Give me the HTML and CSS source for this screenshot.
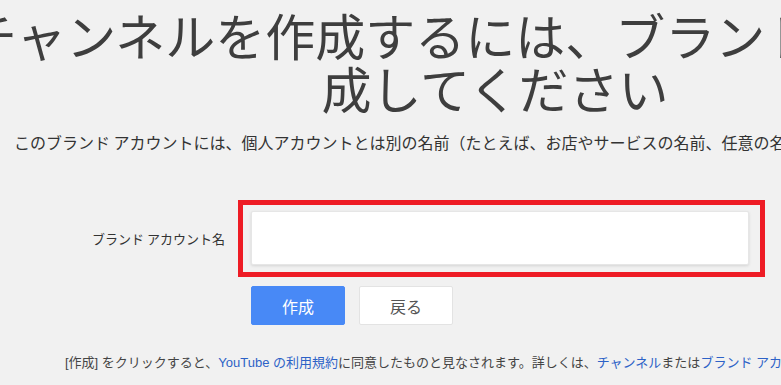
FILE: index.html
```html
<!DOCTYPE html>
<html lang="ja">
<head>
<meta charset="utf-8">
<title>ブランド アカウントを作成</title>
<link rel="stylesheet" href="styles.css">
</head>
<body>
<main class="page">
  <h1 class="title">YouTube チャンネルを作成するには、ブランド アカウントを作<br>成してください</h1>
  <p class="lead">このブランド アカウントには、個人アカウントとは別の名前（たとえば、お店やサービスの名前、任意の名前など）を使用できます。</p>
  <form class="form">
    <label class="form-label" for="brand-name">ブランド アカウント名</label>
    <div class="highlight">
      <input class="text-input" id="brand-name" type="text">
    </div>
    <div class="actions">
      <button class="btn btn-primary" type="button">作成</button>
      <button class="btn btn-secondary" type="button">戻る</button>
    </div>
  </form>
  <p class="terms">[作成] をクリックすると、<a href="#">YouTube の利用規約</a>に同意したものと見なされます。詳しくは、<a href="#">チャンネル</a>または<a href="#">ブランド アカウント</a>についての説明をご覧ください。</p>
</main>
</body>
</html>
```

FILE: styles.css
```css
html, body {
  margin: 0;
  padding: 0;
  overflow: hidden;
  background: #f1f1f1;
}

body {
  font-family: "Noto Sans CJK JP", "Noto Sans", sans-serif;
  color: #333;
}

.page {
  width: 990px;
  padding-top: 8px;
  display: flex;
  flex-direction: column;
  align-items: center;
}

.title {
  margin: 0;
  font-size: 50px;
  line-height: 53px;
  font-weight: 400;
  color: #3e3e3e;
  text-align: center;
  text-indent: -58px;
  white-space: nowrap;
}

.lead {
  margin: 16px 0 0;
  font-size: 16px;
  line-height: 24px;
  color: #333;
  white-space: nowrap;
}

.form {
  align-self: flex-start;
  margin-top: 46px;
  display: grid;
  grid-template-columns: 225px auto;
  column-gap: 13px;
  row-gap: 9px;
  align-items: center;
}

.form-label {
  text-align: right;
  font-size: 13px;
  color: #333;
}

.highlight {
  border: 5px solid #ee1c25;
  padding: 6px 11px 7px 8px;
}

.text-input {
  display: block;
  box-sizing: border-box;
  width: 498px;
  height: 54px;
  border: 1px solid #e6e6e6;
  border-radius: 2px;
  background: #fff;
  box-shadow: 0 1px 3px rgba(0, 0, 0, 0.12);
  outline: none;
}

.actions {
  grid-column: 2;
  display: flex;
  gap: 14px;
  padding-left: 13px;
}

.btn {
  width: 94px;
  height: 39px;
  box-sizing: border-box;
  border-radius: 2px;
  font-family: "Noto Sans CJK JP", sans-serif;
  font-size: 16px;
  cursor: pointer;
}

.btn-primary {
  background: #4889f6;
  border: 1px solid #4889f6;
  color: #fff;
}

.btn-secondary {
  background: #fff;
  border: 1px solid #e3e3e3;
  color: #555;
}

.terms {
  align-self: flex-start;
  margin: 29px 0 0 65px;
  font-family: "Liberation Sans", "Noto Sans CJK JP", sans-serif;
  font-size: 13px;
  line-height: 18px;
  color: #444;
  white-space: nowrap;
}

.terms a {
  color: #2d62c7;
  text-decoration: none;
}
```
